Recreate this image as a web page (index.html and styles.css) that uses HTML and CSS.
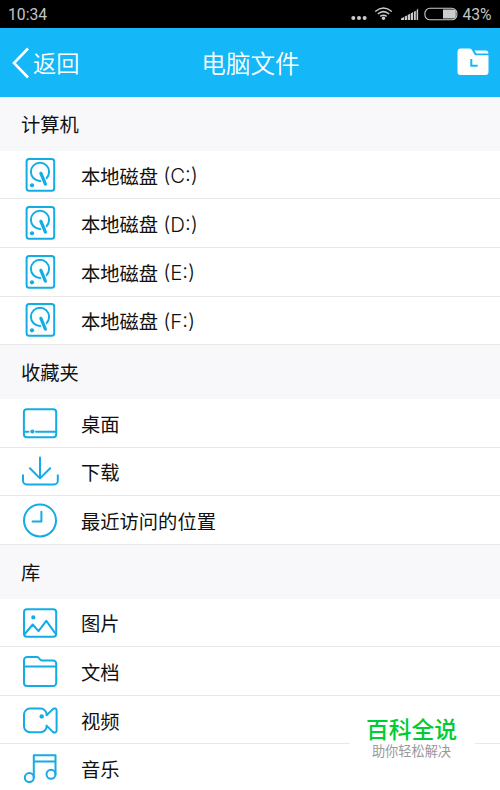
FILE: index.html
```html
<!DOCTYPE html>
<html lang="zh-CN">
<head>
    <meta charset="UTF-8">
    <title>电脑文件</title>
    <link rel="stylesheet" href="styles.css">
</head>
<body>

<!-- 图标 -->
<svg class="defs">
    <symbol id="disk" viewBox="0 0 40 40">
        <rect x="6.6" y="3.9" width="27.6" height="31.9" rx="2.5"/>
        <circle cx="20" cy="16.8" r="9.1"/>
        <path class="gap" d="M21.6 20l4 9.6"/>
        <path class="arm" d="M20.9 18.3l4.5 10.9"/>
        <circle class="dot" cx="12" cy="30.3" r="2.1"/>
    </symbol>
    <symbol id="desktop" viewBox="0 0 40 40">
        <rect x="3.9" y="6.2" width="32.3" height="28" rx="3"/>
        <path d="M4.5 28.8h4M16 28.8h20"/>
        <circle class="dot" cx="12.4" cy="28.5" r="2.1"/>
    </symbol>
    <symbol id="download" viewBox="0 0 40 40">
        <path d="M20 6.5v20.8M9.9 17.2L20 27.4l10.2-10.2M3 24.2v5.6a3.6 3.6 0 0 0 3.6 3.6h27.6a3.6 3.6 0 0 0 3.6-3.6v-5.6"/>
    </symbol>
    <symbol id="clock" viewBox="0 0 40 40">
        <circle cx="20" cy="20.4" r="16"/>
        <path d="M21.4 11.7v9.8h-8.8"/>
    </symbol>
    <symbol id="picture" viewBox="0 0 40 40">
        <rect x="4" y="7.2" width="32.2" height="27.5" rx="3"/>
        <path d="M4.8 32l7.9-9.5 5.8 6.7 7.8-10.4 9.4 13"/>
        <circle class="dot" cx="13.3" cy="15.4" r="2.1"/>
    </symbol>
    <symbol id="folder" viewBox="0 0 40 40">
        <path d="M4 32V9.2a3.2 3.2 0 0 1 3.2-3.2H17c2.6 0 2.3 3.600 5 3.600h11a3.200 3.200 0 0 1 3.200 3.200V32a3 3 0 0 1-3 3H7a3 3 0 0 1-3-3zM4 15.400h32.200"/>
    </symbol>
    <symbol id="video" viewBox="0 0 40 40">
        <path d="M26.600 15.200l6.200-6.100c1.600-1.300 3.800-.7 3.800 1.400v20c0 2.100-2.200 2.700-3.800 1.400l-6.200-6.300v.6a6 6 0 0 1-6 6H10a6 6 0 0 1-6-6V14.600a6 6 0 0 1 6-6h10.600a6 6 0 0 1 6 6z"/>
        <circle class="dot" cx="21.700" cy="16.400" r="2.200"/>
    </symbol>
    <symbol id="music" viewBox="0 0 40 40">
        <path d="M13.800 29.600V7.300h21.700v19M13.800 13.600h21.700"/>
        <circle cx="9.300" cy="29.600" r="4.500"/>
        <circle cx="31" cy="26.300" r="4.500"/>
    </symbol>
</svg>

<div class="status">
    <span>10:34</span>
    <div class="status-right">
        <svg class="status-icons" viewBox="0 0 108 28">
            <g fill="#ccc">
                <circle cx="3.300" cy="18" r="2"/>
                <circle cx="9" cy="18" r="2"/>
                <circle cx="14.600" cy="18" r="2"/>
                <circle cx="33.500" cy="18.300" r="1.700"/>
                <path d="M51 20v-1.500l3-1.500v3zM54.700 20v-3.400l2.300-1.200V20zM57.700 20v-5l2.300-1.300V20zM60.700 20v-6.500l2.400-1.400V20zM64 20v-8.300l1.800-1V20zM66.600 20v-9.800l1.500-1.700V20z"/>
                <path d="M93 9.600h10.300a2.500 2.500 0 0 1 2.500 2.500v4a2.500 2.500 0 0 1-2.500 2.500H93z"/>
            </g>
            <g fill="none" stroke="#ccc" stroke-width="1.500">
                <path d="M25.200 11.500q8.300-6.800 16.600 0M27.800 14q5.700-4.700 11.400 0M30.300 16.400q3.200-2.500 6.400 0"/>
                <rect x="74.900" y="8.300" width="32" height="11.500" rx="5" stroke-width="1.100"/>
            </g>
        </svg>
        <span>43%</span>
    </div>
</div>

<div class="header">
    <a class="back">
        <svg class="arrow" viewBox="0 0 17 32"><path d="M16 1.500L2 16l14 14.500"/></svg>
        <span>返回</span>
    </a>
    <h3 class="title">电脑文件</h3>
    <svg class="recent" viewBox="0 0 32 28">
        <path d="M3 .5h9.500c1 0 1.700.4 2.200 1.200l3.300 5.600h13.500V24a3 3 0 0 1-3 3H3.500a3 3 0 0 1-3-3V3.500a3 3 0 0 1 2.500-3z"/>
        <path d="M17.500 2.600h11.200c1.800 0 2.500.8 2.800 3h-12.200z"/>
        <path class="hand" d="M14.300 11v6.700h6.400"/>
    </svg>
</div>

<div class="group">计算机</div>
<ul class="list">
    <li><svg><use href="#disk"/></svg>本地磁盘 <span class="drive">(C:)</span></li>
    <li><svg><use href="#disk"/></svg>本地磁盘 <span class="drive">(D:)</span></li>
    <li><svg><use href="#disk"/></svg>本地磁盘 <span class="drive">(E:)</span></li>
    <li><svg><use href="#disk"/></svg>本地磁盘 <span class="drive">(F:)</span></li>
</ul>

<div class="group">收藏夹</div>
<ul class="list">
    <li><svg><use href="#desktop"/></svg>桌面</li>
    <li><svg><use href="#download"/></svg>下载</li>
    <li><svg><use href="#clock"/></svg>最近访问的位置</li>
</ul>

<div class="group">库</div>
<ul class="list">
    <li><svg><use href="#picture"/></svg>图片</li>
    <li><svg><use href="#folder"/></svg>文档</li>
    <li><svg><use href="#video"/></svg>视频</li>
    <li><svg><use href="#music"/></svg>音乐</li>
</ul>

<div class="mark">
    <strong>百科全说</strong>
    <span>助你轻松解决</span>
</div>

</body>
</html>
```
FILE: styles.css
```css
*{
    padding: 0;
    margin: 0;
    box-sizing: border-box;
}
body {
    height: 790px;
    overflow: hidden;
    position: relative;
    background-color: #fff;
    color: #111;
    font-family: "Noto Sans CJK SC", sans-serif;
    font-size: 19.3px;
}

.defs{
    display: none;
}

.status{
    display: flex;
    justify-content: space-between;
    height: 28px;
    padding: 0 8.5px 0 8px;
    background-color: #000;
    color: #c4c4c4;
    font-family: Roboto, sans-serif;
    font-size: 15.7px;
    line-height: 30px;
}

.status-right{
    display: flex;
    gap: 4px;
}

.status-icons{
    width: 108px;
    height: 28px;
}

.header{
    display: grid;
    grid-template-columns: 1fr auto 1fr;
    align-items: center;
    height: 69px;
    padding: 0 11px 0 12px;
    background-color: #14b7f7;
    color: #fff;
}

.back{
    display: flex;
    align-items: center;
    gap: 4px;
    font-size: 23.2px;
    font-weight: 350;
}

.back span{
    margin-bottom: 2px;
}

.arrow{
    width: 17px;
    height: 32px;
    fill: none;
    stroke: #fff;
    stroke-width: 2.6;
}

.title{
    margin-bottom: 2px;
    font-size: 24.6px;
    font-weight: 350;
}

.recent{
    justify-self: end;
    width: 32px;
    height: 28px;
    margin-bottom: 2px;
    fill: #fff;
}

.hand{
    fill: none;
    stroke: #14b7f7;
    stroke-width: 2;
}

.group{
    height: 53.7px;
    padding-left: 21px;
    background-color: #f8f8fb;
    line-height: 55px;
}

.list{
    list-style: none;
}

.list li{
    display: flex;
    align-items: center;
    height: 48.65px;
    padding: 2px 0 0 20px;
    border-bottom: 1px solid #e8e8e8;
}

.list svg{
    width: 40px;
    height: 40px;
    margin: 0 21px 2px 0;
    fill: none;
    stroke: #14ace4;
    stroke-width: 2;
    stroke-linecap: round;
    stroke-linejoin: round;
}

.list .drive{
    margin-left: 5px;
    font-family: Inter, sans-serif;
    font-size: 20.4px;
    font-weight: 300;
}

.gap{
    stroke: #fff;
    stroke-width: 5.4;
}

.arm{
    stroke-width: 3.2;
}

.dot{
    fill: #14ace4;
    stroke: none;
}

/* 右下角水印 */
.mark{
    position: absolute;
    right: 25px;
    bottom: 0;
    display: flex;
    flex-direction: column;
    align-items: center;
    width: 125px;
    height: 85px;
    padding: 11px 2px 0 0;
    background-color: #fff;
}

.mark strong{
    color: #0c3;
    font-size: 22.8px;
    font-weight: 500;
    line-height: 26px;
}

.mark span{
    color: #999;
    font-size: 13.2px;
    line-height: 17px;
}
```
